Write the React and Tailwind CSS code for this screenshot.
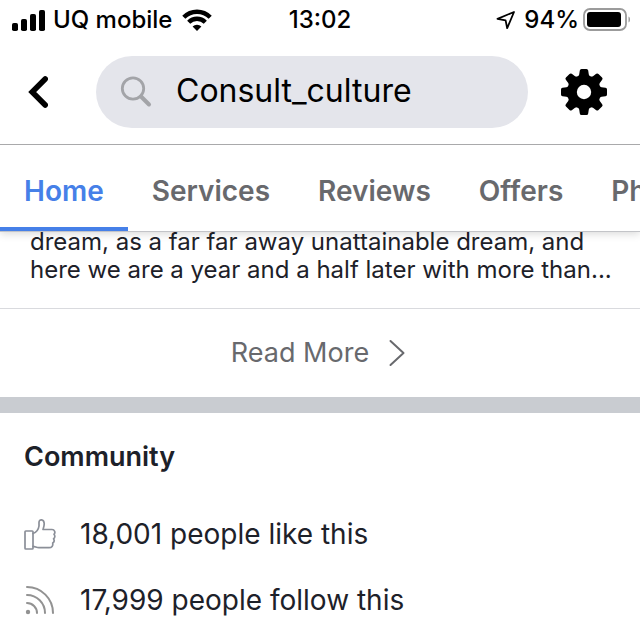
import React, { useState } from 'react';

const tabs = ['Home', 'Services', 'Reviews', 'Offers', 'Photos'];

const StatusBar = () => (
  <div className="grid grid-cols-3 items-center h-10 pl-3 pr-2 text-[24px] leading-10 font-medium text-black whitespace-nowrap">
    <div className="flex items-center gap-2">
      <svg className="w-[33px] h-[21px] shrink-0" viewBox="0 0 33 21" fill="currentColor" aria-hidden="true">
        <rect x="0" y="13" width="6" height="8" rx="1.8" />
        <rect x="9" y="9" width="6" height="12" rx="1.8" />
        <rect x="18" y="4" width="6" height="17" rx="1.8" />
        <rect x="27" y="0" width="6" height="21" rx="1.8" />
      </svg>
      <span>UQ mobile</span>
      <svg className="w-[30px] h-[22px] ml-0.5 shrink-0" viewBox="0 0 30 22" fill="none" stroke="currentColor" strokeWidth="4.4" aria-hidden="true">
        <path d="M1.8 8.2a18.7 18.7 0 0 1 26.4 0" />
        <path d="M6.7 13.2a11.8 11.8 0 0 1 16.6 0" />
        <path d="M15 22l-4.400 -4.400a6.400 6.400 0 0 1 8.800 0z" fill="currentColor" stroke="none" />
      </svg>
    </div>
    <span className="pr-1 text-center">13:02</span>
    <div className="flex items-center justify-end gap-1">
      <svg className="w-5 h-5 shrink-0 mr-1" viewBox="0 0 20 20" fill="none" stroke="currentColor" strokeWidth="1.8" strokeLinejoin="round" aria-hidden="true">
        <path d="M18 2L1.500 8.800L9.600 10.400L11.200 18.200z" />
      </svg>
      <span>94%</span>
      <svg className="w-[49px] h-6 shrink-0" viewBox="0 0 49 24" aria-hidden="true">
        <rect x="1" y="1" width="42" height="21" rx="6" fill="none" stroke="#9b9b9b" strokeWidth="1.8" />
        <rect x="4" y="4" width="34" height="15" rx="3" fill="#000" />
        <path d="M45.500 8.500c2 .6 2 5.400 0 6z" fill="#9b9b9b" />
      </svg>
    </div>
  </div>
);

const SearchHeader = () => {
  const [query, setQuery] = useState('Consult_culture');

  return (
    <div className="flex items-center pt-4 pb-4 border-b border-[#a9a9ab]">
      <button type="button" aria-label="Back" className="flex w-24 shrink-0 pl-7">
        <svg className="w-5 h-9" viewBox="0 0 20 36" fill="none" stroke="#000" strokeWidth="5.6" strokeLinecap="round">
          <path d="M17.200 5L4.200 18L17.200 31" strokeLinejoin="miter" />
        </svg>
      </button>
      <label className="flex flex-1 min-w-0 items-center h-[72px] rounded-full bg-[#e4e5eb] pl-6 pr-6">
        <svg className="w-8 h-8 shrink-0" viewBox="0 0 32 32" fill="none" stroke="#a3a4a8" strokeLinecap="round" aria-hidden="true">
          <circle cx="13" cy="12.500" r="10.700" strokeWidth="2.800" />
          <path d="M21 20.500L29 28.500" strokeWidth="4" />
        </svg>
        <input
          type="text"
          aria-label="Search"
          value={query}
          onChange={(e) => setQuery(e.target.value)}
          className="flex-1 min-w-0 ml-6 pb-0.5 bg-transparent text-[32px] leading-10 text-black outline-none"
        />
      </label>
      <button type="button" aria-label="Settings" className="flex justify-center w-28 shrink-0">
        <svg className="w-12 h-12" viewBox="-24 -24 48 48">
          <g fill="#000">
            {[0, 45, 90, 135, 180, 225, 270, 315].map((angle) => (
              <path key={angle} transform={`rotate(${angle})`} d="M-6.500 -14L-4.800 -17.500L-4.200 -21.500Q-4 -23 -2.500 -23H2.500Q4 -23 4.200 -21.500L4.800 -17.500L6.500 -14z" />
            ))}
            <circle r="17" />
          </g>
          <circle r="7.200" fill="#fff" />
        </svg>
      </button>
    </div>
  );
};

const TabBar = () => {
  const [active, setActive] = useState('Home');

  return (
    <nav className="flex overflow-x-auto [scrollbar-width:none] border-b border-[#c3c4c8] text-[28px] leading-8 font-semibold">
      {tabs.map((tab) => (
        <a
          key={tab}
          href={`#${tab.toLowerCase()}`}
          onClick={() => setActive(tab)}
          className={`px-6 pt-[30px] pb-5 border-b-4 ${active === tab ? 'text-[#4680e8] border-[#4680e8]' : 'text-[#68696d] border-transparent'}`}
        >
          {tab}
        </a>
      ))}
    </nav>
  );
};

const Community = () => (
  <section className="px-6 pt-7 text-[#1d2129]">
    <h2 className="text-[27px] leading-8 font-semibold">Community</h2>
    <ul className="mt-7 text-[28px] leading-8">
      <li className="flex items-center gap-6 h-[66px]">
        <svg className="w-8 h-8 shrink-0" viewBox="0 0 32 32" fill="none" stroke="#8b8f98" strokeWidth="1.700" strokeLinejoin="round" strokeLinecap="round" aria-hidden="true">
          <rect x="1" y="13" width="8" height="18" rx="0.800" />
          <path d="M9 15.500C12 14.500 14.500 11.500 15 8V4.500C15 .8 20 .8 20.200 5.500C20.300 8 19.500 10 19 11.500H28C30.500 11.500 31.800 14.500 30 16.300C31.300 17.800 31 19.800 29.600 20.800C30.500 22.500 30 24.300 28.700 25C29.200 28 27.800 29.700 25 29.700H15C12.500 29.700 11 28.300 9 28.300" />
        </svg>
        <span>18,001 people like this</span>
      </li>
      <li className="flex items-center gap-6 h-[66px]">
        <svg className="w-8 h-8 shrink-0" viewBox="0 0 32 32" fill="none" stroke="#929292" strokeWidth="2" strokeLinecap="round" aria-hidden="true">
          <circle cx="4" cy="28" r="2.200" fill="#929292" stroke="none" />
          <path d="M3 19A10 10 0 0 1 13 29" />
          <path d="M3 11A18 18 0 0 1 21 29" />
          <path d="M3 3A26 26 0 0 1 29 29" />
        </svg>
        <span>17,999 people follow this</span>
      </li>
    </ul>
  </section>
);

const App = () => (
  <div className="h-screen overflow-hidden bg-white font-['Inter','Liberation_Sans',sans-serif]">
    <header className="relative z-10 bg-white shadow-[0_2px_8px_rgba(0,0,0,0.15)]">
      <StatusBar />
      <SearchHeader />
      <TabBar />
    </header>

    <main>
      <article className="-mt-1">
        <p className="pl-[30px] pr-6 pb-6 text-[24px] leading-7 text-[#1d2129]">
          dream, as a far far away unattainable dream, and here we are a year and a half later with more than...
        </p>
        <a href="#more" className="flex items-center justify-center gap-5 h-[89px] pr-1 border-t border-[#d9dade] text-[27px] leading-8 text-[#68696d]">
          Read More
          <svg className="w-4 h-7" viewBox="0 0 16 28" fill="none" stroke="currentColor" strokeWidth="2" strokeLinecap="round" strokeLinejoin="round" aria-hidden="true">
            <path d="M1.500 2L14.500 14L1.500 26" />
          </svg>
        </a>
      </article>
      <div className="h-4 bg-[#c9ccd1]" />
      <Community />
    </main>
  </div>
);

export default App;
